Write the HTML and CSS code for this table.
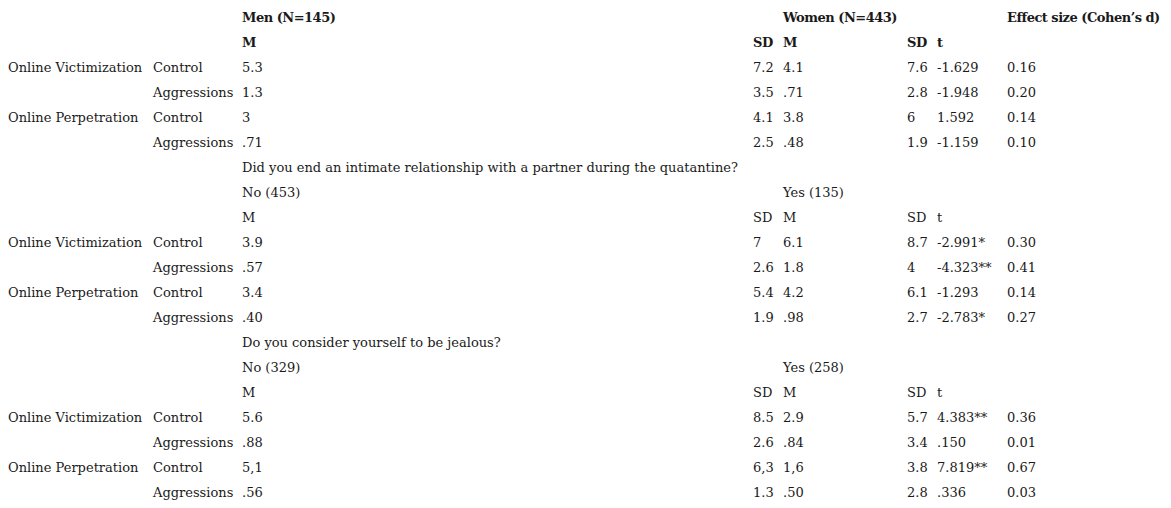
FILE: index.html
```html
<!DOCTYPE html>
<html lang="en">
<head>
<meta charset="utf-8">
<title>Online victimization and perpetration</title>
<link rel="stylesheet" href="styles.css">
</head>
<body>
<table class="stats">
  <colgroup>
    <col class="c-var"><col class="c-type"><col class="c-m1"><col class="c-sd1"><col class="c-m2"><col class="c-sd2"><col class="c-t"><col class="c-d">
  </colgroup>
  <tbody>
    <tr class="hd"><td></td><td></td><td colspan="2">Men (N=145)</td><td colspan="3">Women (N=443)</td><td>Effect size (Cohen’s d)</td></tr>
    <tr class="hd"><td></td><td></td><td>M</td><td>SD</td><td>M</td><td>SD</td><td>t</td><td></td></tr>
    <tr><td>Online Victimization</td><td>Control</td><td>5.3</td><td>7.2</td><td>4.1</td><td>7.6</td><td>-1.629</td><td>0.16</td></tr>
    <tr><td></td><td>Aggressions</td><td>1.3</td><td>3.5</td><td>.71</td><td>2.8</td><td>-1.948</td><td>0.20</td></tr>
    <tr><td>Online Perpetration</td><td>Control</td><td>3</td><td>4.1</td><td>3.8</td><td>6</td><td>1.592</td><td>0.14</td></tr>
    <tr><td></td><td>Aggressions</td><td>.71</td><td>2.5</td><td>.48</td><td>1.9</td><td>-1.159</td><td>0.10</td></tr>

    <tr><td></td><td></td><td colspan="6">Did you end an intimate relationship with a partner during the quatantine?</td></tr>
    <tr><td></td><td></td><td colspan="2">No (453)</td><td colspan="3">Yes (135)</td><td></td></tr>
    <tr><td></td><td></td><td>M</td><td>SD</td><td>M</td><td>SD</td><td>t</td><td></td></tr>
    <tr><td>Online Victimization</td><td>Control</td><td>3.9</td><td>7</td><td>6.1</td><td>8.7</td><td>-2.991*</td><td>0.30</td></tr>
    <tr><td></td><td>Aggressions</td><td>.57</td><td>2.6</td><td>1.8</td><td>4</td><td>-4.323**</td><td>0.41</td></tr>
    <tr><td>Online Perpetration</td><td>Control</td><td>3.4</td><td>5.4</td><td>4.2</td><td>6.1</td><td>-1.293</td><td>0.14</td></tr>
    <tr><td></td><td>Aggressions</td><td>.40</td><td>1.9</td><td>.98</td><td>2.7</td><td>-2.783*</td><td>0.27</td></tr>

    <tr><td></td><td></td><td colspan="6">Do you consider yourself to be jealous?</td></tr>
    <tr><td></td><td></td><td colspan="2">No (329)</td><td colspan="3">Yes (258)</td><td></td></tr>
    <tr><td></td><td></td><td>M</td><td>SD</td><td>M</td><td>SD</td><td>t</td><td></td></tr>
    <tr><td>Online Victimization</td><td>Control</td><td>5.6</td><td>8.5</td><td>2.9</td><td>5.7</td><td>4.383**</td><td>0.36</td></tr>
    <tr><td></td><td>Aggressions</td><td>.88</td><td>2.6</td><td>.84</td><td>3.4</td><td>.150</td><td>0.01</td></tr>
    <tr><td>Online Perpetration</td><td>Control</td><td>5,1</td><td>6,3</td><td>1,6</td><td>3.8</td><td>7.819**</td><td>0.67</td></tr>
    <tr><td></td><td>Aggressions</td><td>.56</td><td>1.3</td><td>.50</td><td>2.8</td><td>.336</td><td>0.03</td></tr>
  </tbody>
</table>
</body>
</html>
```

FILE: styles.css
```css
html, body {
  margin: 0;
  padding: 0;
  background: #fff;
}

body {
  padding: 5px 0 0 8px;
  font-family: "DejaVu Serif", "Liberation Serif", serif;
  font-size: 13px;
  color: #1a1a1a;
}

.stats {
  border-collapse: collapse;
  table-layout: fixed;
  width: 1163px;
}

.c-var { width: 145px; }
.c-type { width: 89px; }
.c-m1 { width: 511px; }
.c-sd1 { width: 30px; }
.c-m2 { width: 124px; }
.c-sd2 { width: 30px; }
.c-t { width: 70px; }
.c-d { width: 164px; }

.stats td {
  height: 25px;
  padding: 0;
  vertical-align: middle;
  white-space: nowrap;
  line-height: 25px;
}

.hd td {
  font-weight: bold;
  letter-spacing: -0.5px;
}
```
